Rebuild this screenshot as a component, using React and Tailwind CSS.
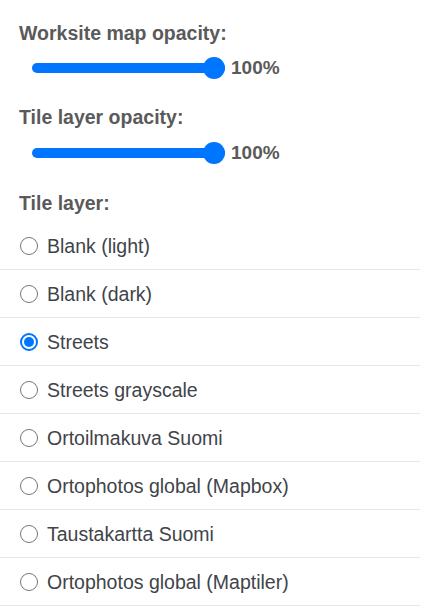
import React, { useState } from 'react';

const OpacitySlider = ({ value }) => (
  <div className="flex items-center h-[22px] pl-[13px]">
    <div className="relative w-[193px] h-[22px] flex items-center">
      <div className="w-full h-[10px] rounded-full bg-[#0075ff]" />
      <div
        className="absolute top-0 w-[22px] h-[22px] rounded-full bg-[#0075ff]"
        style={{ left: `calc(${value}% - ${(value / 100) * 22}px)` }}
      />
    </div>
    <span className="ml-[6px] text-[19px] leading-[22px] font-bold text-[#5a5a5a]">{value}%</span>
  </div>
);

const Radio = ({ checked }) => (
  <span
    className={`flex shrink-0 items-center justify-center w-[18px] h-[18px] rounded-full ${
      checked ? 'border-2 border-[#0075ff]' : 'border border-[#767676]'
    }`}
  >
    {checked && <span className="w-[10px] h-[10px] rounded-full bg-[#0075ff]" />}
  </span>
);

const layers = [
  'Blank (light)',
  'Blank (dark)',
  'Streets',
  'Streets grayscale',
  'Ortoilmakuva Suomi',
  'Ortophotos global (Mapbox)',
  'Taustakartta Suomi',
  'Ortophotos global (Maptiler)',
];

export default function App() {
  const [selected, setSelected] = useState('Streets');

  return (
    <div className="w-[426px] h-[606px] bg-white overflow-hidden font-['Liberation_Sans',Arial,sans-serif]">
      <div className="pl-[19px] pt-[22px]">
        <div className="text-[19.5px] leading-[22px] font-bold text-[#5a5a5a]">Worksite map opacity:</div>
        <div className="mt-[13px]">
          <OpacitySlider value={100} />
        </div>
        <div className="mt-[27px] text-[19.5px] leading-[22px] font-bold text-[#5a5a5a]">Tile layer opacity:</div>
        <div className="mt-[14px]">
          <OpacitySlider value={100} />
        </div>
        <div className="mt-[28px] text-[19.5px] leading-[22px] font-bold text-[#5a5a5a]">Tile layer:</div>
      </div>
      <ul className="mt-[8px] w-[420px]">
        {layers.map(name => (
          <li
            key={name}
            onClick={() => setSelected(name)}
            className="h-12 flex items-center gap-[9px] pl-[20px] border-b border-[#e6e6e6] cursor-pointer"
          >
            <Radio checked={selected === name} />
            <span className="text-[19.5px] leading-[22px] text-[#3f444a]">{name}</span>
          </li>
        ))}
      </ul>
    </div>
  );
}
